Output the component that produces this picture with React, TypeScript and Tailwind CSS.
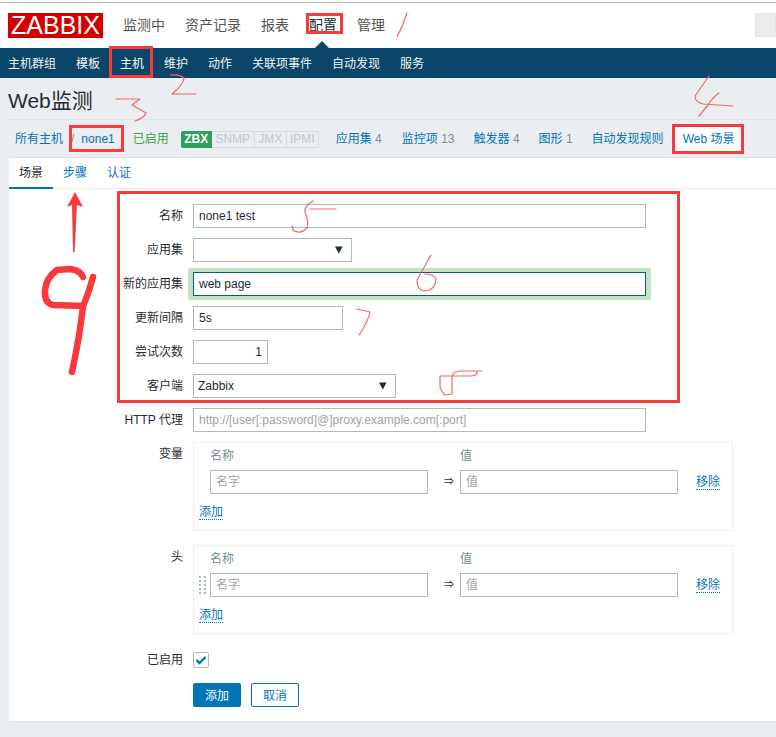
import React from "react";

const font = { fontFamily: '"Liberation Sans","Noto Sans CJK SC",sans-serif' };

function Row({ label, children, className = "mt-[10px]" }: { label: string; children: React.ReactNode; className?: string }) {
  return (
    <div className={`flex ${className}`}>
      <div className="w-[174px] h-[24px] leading-[24px] text-right text-[12px] text-[#1f2c33] shrink-0">{label}</div>
      <div className="ml-[10px]">{children}</div>
    </div>
  );
}

const inputCls =
  "block h-[24px] border border-[#acbbc2] bg-white px-[5px] text-[12px] text-[#1f2c33] outline-none placeholder:text-[#a3a3a3]";

function Select({ w, text }: { w: string; text?: string }) {
  return (
    <div className={`${w} h-[24px] border border-[#acbbc2] bg-white flex items-center justify-between pl-[4px] pr-[7px] text-[12px] text-[#1f2c33]`}>
      <span>{text}</span>
      <svg width="10" height="8" viewBox="0 0 10 8"><path d="M1 0.5h7.6L4.8 7.5z" fill="#1f2c33" /></svg>
    </div>
  );
}

function Dotted({ children }: { children: React.ReactNode }) {
  return <span className="text-[12px] leading-[15px] text-[#0275b8] border-b border-dotted border-[#0275b8]">{children}</span>;
}

function PairBox({ handle }: { handle?: boolean }) {
  return (
    <div className="w-[540px] h-[89px] border border-[#ebeef0] pt-[5px] text-[12px]">
      <div className="flex h-[16px] leading-[16px] text-[#768d99] pl-[16px]">
        <span className="w-[250px]">名称</span>
        <span>值</span>
      </div>
      <div className="flex items-center mt-[6px]">
        <div className="w-[16px] flex justify-center pl-[1px]">
          {handle && (
            <div className="grid grid-cols-2 gap-x-[3px] gap-y-[2px] w-[7px]">
              {Array.from({ length: 10 }).map((_, i) => (
                <span key={i} className="w-[2px] h-[2px] bg-[#acbbc2]" />
              ))}
            </div>
          )}
        </div>
        <input readOnly placeholder="名字" className={`${inputCls} w-[218px]`} />
        <span className="w-[32px] pl-[16px] text-[10px] leading-[12px] text-[#1f2c33]">⇒</span>
        <input readOnly placeholder="值" className={`${inputCls} w-[218px]`} />
        <span className="ml-[18px]"><Dotted>移除</Dotted></span>
      </div>
      <div className="mt-[9px] ml-[5px] h-[17px]"><Dotted>添加</Dotted></div>
    </div>
  );
}

function Count({ name, n, className }: { name: string; n?: string; className: string }) {
  return (
    <span className={`${className} whitespace-nowrap`}>
      <span className="text-[#0275b8]">{name}</span>
      {n && <span className="text-[#768d99]"> {n}</span>}
    </span>
  );
}

function Annotations() {
  const thin = { fill: "none", stroke: "#f4656b", strokeWidth: 1.2, strokeLinejoin: "round" as const, strokeLinecap: "round" as const };
  return (
    <svg className="absolute left-0 top-0 pointer-events-none" width="776" height="737" viewBox="0 0 776 737">
      <path {...thin} d="M407 13 Q403 26 397 37" />
      <path {...thin} d="M170 75 Q180 74 184 78 Q184 84 172 94 L196 94" />
      <path {...thin} d="M116 99 L140 99 L132 105 L146 113 Q144 118 135 121" />
      <path {...thin} d="M709 76 L695 96 Q695 102 703 104 L733 106 M719 93 Q712 98 708 105 L699 116" />
      <path {...thin} d="M313 201 Q304 206 305 212 Q309 222 307 228 Q300 235 293 230 L292 226 M310 209 L336 209" />
      <path {...thin} d="M431 255 L417 280 Q417 290 424 291 Q435 291 436 279 Q434 274 425 274" />
      <path {...thin} d="M357 309 L370 312 Q368 322 359 335" />
      <path {...thin} d="M482 371 L459 371 Q452 372 452 378 L452 394 L445 395 Q440 390 440 386 L440 376 L470 376 Q477 376 477 372" />
      <path fill="none" stroke="#f93a3c" strokeWidth="6.5" strokeLinecap="round" strokeLinejoin="round" d="M83 277 Q80 270 70 269 L57 270 Q46 278 45 290 Q44 303 53 305 L83 306 M93 277 Q88 295 83 306 Q80 335 72 372" />
      <path fill="#f93a3c" d="M75 192 L67 207 L72 205 L73 252 L74.5 252 L77 205 L83 207 Z" />
    </svg>
  );
}

function RedBox({ className }: { className: string }) {
  return <div className={`absolute border-[3px] border-[#f93a3c] ${className}`} />;
}

export default function App() {
  return (
    <div style={font} className="relative w-[776px] h-[737px] overflow-hidden bg-[#ebeef0]">
      <div className="h-[2px] bg-white" />
      <div className="h-[1px] bg-[#bdbdbd]" />

      {/* top menu */}
      <header className="relative h-[45px] bg-white flex items-start justify-between pt-[10px] pl-[8px]">
        <div className="flex">
          <div className="w-[95px] h-[25px] bg-[#d40000] text-white text-[25px] leading-[25px] text-center">ZABBIX</div>
          <nav className="flex gap-[20px] ml-[20px] text-[14px] leading-[24px] text-[#555555]">
            <span>监测中</span>
            <span>资产记录</span>
            <span>报表</span>
            <span className="text-[#1f2c33]">配置</span>
            <span>管理</span>
          </nav>
        </div>
        <div className="w-[21px] h-[24px] bg-[#ebebeb] border border-[#e4e4e4]" />
        <div className="absolute left-[315px] top-[38px] w-0 h-0 border-l-[7px] border-r-[7px] border-b-[7px] border-l-transparent border-r-transparent border-b-[#0a466a]" />
      </header>

      {/* sub menu */}
      <nav className="h-[30px] bg-[#0a466a] flex items-center gap-[20px] pl-[8px] pt-[1px] text-[12px] text-[#f2f2f2]">
        <span>主机群组</span>
        <span>模板</span>
        <span className="text-white">主机</span>
        <span>维护</span>
        <span>动作</span>
        <span>关联项事件</span>
        <span>自动发现</span>
        <span>服务</span>
      </nav>

      {/* title */}
      <h1 className="h-[41px] ml-[8px] mr-0 pt-[11px] text-[21px] leading-[24px] text-[#1f2c33] font-normal">Web监测</h1>
      <div className="h-[1px] ml-[8px] bg-[#dfe4e7]" />

      {/* host nav */}
      <div className="h-[37px] ml-[8px] flex items-center text-[12px] pl-[7px] pt-[1px]">
        <span className="text-[#0275b8]">所有主机</span>
        <span className="ml-[8px] text-[#768d99]">/</span>
        <span className="ml-[7px] text-[#0275b8]">none1</span>
        <span className="ml-[18px] text-[#429e47]">已启用</span>
        <div className="ml-[12px] flex h-[17px] leading-[15px] border border-[#d5dce0] rounded-[2px] text-[12px] font-normal">
          <span className="w-[31px] -ml-px -my-px h-[17px] leading-[17px] bg-[#2f9e5f] text-white text-center font-bold rounded-l-[2px]">ZBX</span>
          <span className="w-[43px] text-center text-[#c0c9ce] border-r border-[#d5dce0]">SNMP</span>
          <span className="w-[32px] text-center text-[#c0c9ce] border-r border-[#d5dce0]">JMX</span>
          <span className="w-[31px] text-center text-[#c0c9ce]">IPMI</span>
        </div>
        <Count name="应用集" n="4" className="ml-[17px]" />
        <Count name="监控项" n="13" className="ml-[20px]" />
        <Count name="触发器" n="4" className="ml-[19px]" />
        <Count name="图形" n="1" className="ml-[19px]" />
        <Count name="自动发现规则" className="ml-[19px]" />
        <div className="ml-[10px] -mb-px h-[27px] pl-[8px] pr-[9px] bg-white border border-[#dfe4e7] leading-[25px] text-[#0275b8] whitespace-nowrap">Web 场景</div>
      </div>

      {/* panel */}
      <main className="relative ml-[9px] h-[564px] bg-white border-t border-[#dfe4e7]">
        <div className="h-[31px] flex border-b border-[#ebeef0] text-[12px] leading-[30px]">
          <span className="w-[44px] text-center h-[31px] border-b-[2px] border-[#0275b8] text-[#1f2c33]">场景</span>
          <span className="ml-[10px] text-[#0275b8]">步骤</span>
          <span className="ml-[20px] text-[#0275b8]">认证</span>
        </div>

        <form className="pt-[15px]">
          <Row label="名称" className="">
            <input readOnly value="none1 test" className={`${inputCls} w-[453px]`} />
          </Row>
          <Row label="应用集">
            <Select w="w-[159px]" />
          </Row>
          <Row label="新的应用集">
            <div className="-mx-[5px] -my-[4px] px-[5px] py-[4px] bg-[#c6e2c6] rounded-[2px]">
              <input readOnly value="web page" className="block w-[453px] h-[24px] border border-[#0a5a85] bg-white px-[5px] text-[12px] text-[#1f2c33] outline-none" />
            </div>
          </Row>
          <Row label="更新间隔">
            <input readOnly value="5s" className={`${inputCls} w-[150px]`} />
          </Row>
          <Row label="尝试次数">
            <input readOnly value="1" className={`${inputCls} w-[75px] text-right`} />
          </Row>
          <Row label="客户端">
            <Select w="w-[203px]" text="Zabbix" />
          </Row>
          <Row label="HTTP 代理">
            <input readOnly placeholder="http://[user[:password]@]proxy.example.com[:port]" className={`${inputCls} w-[453px]`} />
          </Row>
          <div className="flex mt-[10px]">
            <div className="w-[174px] pt-[4px] leading-[16px] text-right text-[12px] text-[#1f2c33] shrink-0">变量</div>
            <div className="ml-[10px]"><PairBox /></div>
          </div>
          <div className="flex mt-[14px]">
            <div className="w-[174px] pt-[4px] leading-[16px] text-right text-[12px] text-[#1f2c33] shrink-0">头</div>
            <div className="ml-[10px]"><PairBox handle /></div>
          </div>
          <div className="flex mt-[17px] items-center">
            <div className="w-[174px] pt-[1px] text-right text-[12px] leading-[16px] text-[#1f2c33] shrink-0">已启用</div>
            <div className="ml-[10px] w-[16px] h-[16px] border border-[#acbbc2] rounded-[2px] flex items-center justify-center">
              <svg width="12" height="10" viewBox="0 0 12 10"><path d="M1.5 5 L4.5 8 L10.5 2" fill="none" stroke="#0275b8" strokeWidth="2.4" /></svg>
            </div>
          </div>
          <div className="flex mt-[15px] ml-[184px] gap-[10px] text-[12px]">
            <button type="button" className="w-[48px] h-[24px] pt-[1px] bg-[#0275b8] text-white rounded-[2px]">添加</button>
            <button type="button" className="w-[48px] h-[24px] pt-[1px] border border-[#0275b8] text-[#0275b8] rounded-[2px] bg-white">取消</button>
          </div>
        </form>
      </main>
      <div className="h-[1px] ml-[9px] bg-[#dfe4e7]" />

      {/* annotation overlay */}
      <RedBox className="left-[306px] top-[13px] w-[37px] h-[21px]" />
      <RedBox className="left-[109px] top-[46px] w-[44px] h-[32px]" />
      <RedBox className="left-[69px] top-[125px] w-[55px] h-[27px]" />
      <RedBox className="left-[672px] top-[124px] w-[72px] h-[30px]" />
      <RedBox className="left-[117px] top-[191px] w-[563px] h-[212px]" />
      <Annotations />
    </div>
  );
}
